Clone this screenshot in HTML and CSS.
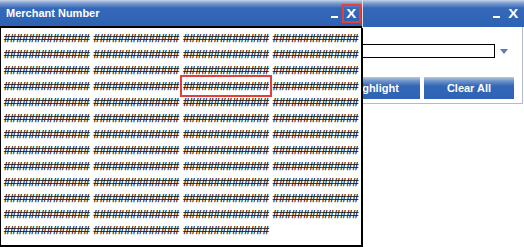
FILE: index.html
```html
<!DOCTYPE html>
<html>
<head>
<meta charset="utf-8">
<link rel="stylesheet" href="styles.css">
</head>
<body>
<div class="desk">
  <div class="win back">
    <div class="titlebar">
      <span class="title"></span>
      <span class="tools"><span class="min"></span><span class="x">X</span></span>
    </div>
    <div class="body">
      <div class="selrow">
        <div class="select"></div>
        <span class="arrow"></span>
      </div>
      <div class="btnrow">
        <button class="btn">Highlight</button>
        <button class="btn">Clear All</button>
      </div>
    </div>
  </div>

  <div class="win front">
    <div class="titlebar">
      <span class="title">Merchant Number</span>
      <span class="tools"><span class="min"></span><span class="closebox"><span class="x">X</span></span></span>
    </div>
    <div class="grid">
      <span>##############</span><span>##############</span><span>##############</span><span>##############</span>
      <span>##############</span><span>##############</span><span>##############</span><span>##############</span>
      <span>##############</span><span>##############</span><span>##############</span><span>##############</span>
      <span>##############</span><span>##############</span><span class="hl">##############</span><span>##############</span>
      <span>##############</span><span>##############</span><span>##############</span><span>##############</span>
      <span>##############</span><span>##############</span><span>##############</span><span>##############</span>
      <span>##############</span><span>##############</span><span>##############</span><span>##############</span>
      <span>##############</span><span>##############</span><span>##############</span><span>##############</span>
      <span>##############</span><span>##############</span><span>##############</span><span>##############</span>
      <span>##############</span><span>##############</span><span>##############</span><span>##############</span>
      <span>##############</span><span>##############</span><span>##############</span><span>##############</span>
      <span>##############</span><span>##############</span><span>##############</span><span>##############</span>
      <span>##############</span><span>##############</span><span>##############</span>
    </div>
  </div>
</div>
</body>
</html>
```
FILE: styles.css
```css
* { box-sizing: border-box; }
html, body { margin: 0; padding: 0; background: #fff; }
body { font-family: "Liberation Sans", Arial, sans-serif; width: 524px; height: 247px; overflow: hidden; }

.desk { position: relative; width: 524px; height: 247px; }

.win { position: absolute; top: 0; background: #fff; }

.titlebar {
  height: 26px;
  display: flex;
  align-items: center;
  justify-content: space-between;
  background: linear-gradient(to bottom, #c8d3e6 0px, #7f9fd0 3px, #3568b8 8px, #2d62b4 100%);
  color: #fff;
}
.title { font-weight: bold; font-size: 11px; line-height: 26px; padding-left: 6px; }
.tools { display: flex; align-items: center; height: 26px; }
.min { display: block; width: 7px; height: 2px; background: #fff; margin-top: 7px; }
.x {
  display: block;
  font-weight: bold;
  font-size: 13px;
  line-height: 13px;
  transform: scaleX(1.15);
  margin-left: 9px;
}

/* back window */
.back { left: 150px; width: 374px; height: 104px; }
.back .titlebar { height: 27px; }
.back .tools { margin-right: 6px; }
.back .body {
  height: 77px;
  border-right: 1px solid #b3bccb;
  border-bottom: 1px solid #b3bccb;
  margin-right: 1px;
  padding-top: 17px;
}
.selrow { display: flex; align-items: center; height: 13px; }
.select { width: 345px; height: 14px; border: 1px solid #000; background: #fff; }
.arrow {
  width: 0; height: 0;
  border-left: 4px solid transparent;
  border-right: 4px solid transparent;
  border-top: 5px solid #5a7fb8;
  margin-left: 5px;
  margin-top: 2px;
}
.btnrow { display: flex; gap: 4px; margin-top: 20px; padding-left: 180px; }
.btn {
  width: 90px;
  height: 22px;
  border: 0;
  padding: 0;
  margin: 0;
  font-family: "Liberation Sans", Arial, sans-serif;
  font-weight: bold;
  font-size: 11px;
  color: #fff;
  background: linear-gradient(to bottom, #b9c8e2 0px, #6f93cb 4px, #3267b8 9px, #2e63b5 100%);
}

/* front dialog */
.front {
  left: 0;
  width: 363px;
  height: 247px;
  border-right: 1px solid #d8dde6;
}
.front .titlebar { border-bottom: 2px solid #000; height: 28px; }
.front .tools { margin-right: 1px; }
.closebox {
  display: flex;
  align-items: center;
  justify-content: center;
  border: 2px solid #e2403c;
  width: 19px;
  height: 19px;
  margin-left: 4px;
  margin-top: 1px;
}
.closebox .x { margin-left: 0; }
.grid {
  height: 219px;
  border-left: 1px solid #000;
  border-right: 2px solid #000;
  border-bottom: 2px solid #000;
  margin-right: -1px;
  display: grid;
  grid-template-columns: repeat(4, 85.6px);
  column-gap: 4px;
  align-content: start;
  padding: 2px 0 0 3px;
  font-size: 11px;
  line-height: 16px;
  color: #000;
  -webkit-text-stroke: 0.25px #000;
}
.grid span { white-space: nowrap; }
.grid .hl { outline: 2px solid #e2403c; outline-offset: 1px; }
```
